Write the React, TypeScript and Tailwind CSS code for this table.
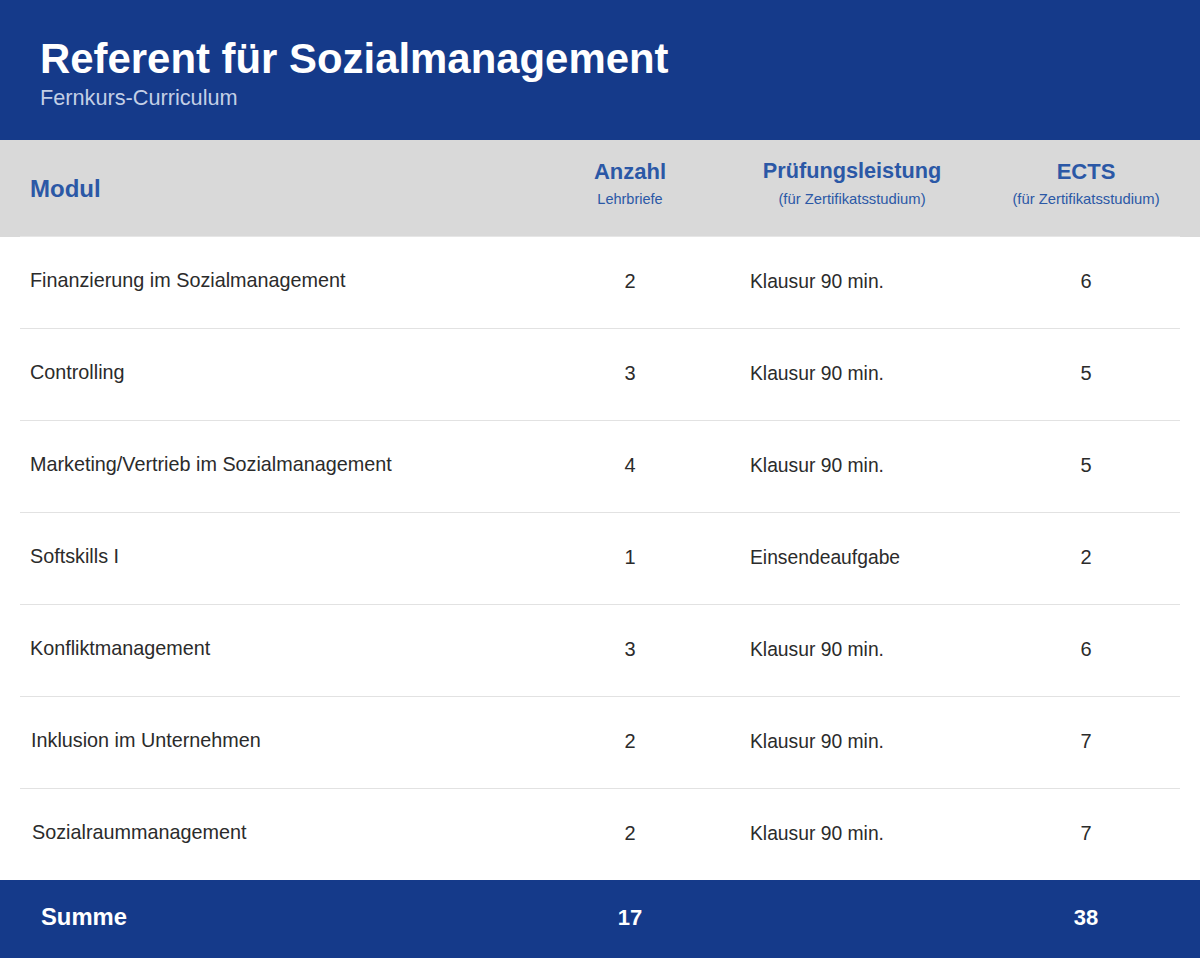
import React from 'react';

interface Modul {
  name: string;
  anzahl: number;
  pruefung: string;
  ects: number;
  indent?: string;
}

const module: Modul[] = [
  { name: 'Finanzierung im Sozialmanagement', anzahl: 2, pruefung: 'Klausur 90 min.', ects: 6 },
  { name: 'Controlling', anzahl: 3, pruefung: 'Klausur 90 min.', ects: 5 },
  { name: 'Marketing/Vertrieb im Sozialmanagement', anzahl: 4, pruefung: 'Klausur 90 min.', ects: 5 },
  { name: 'Softskills I', anzahl: 1, pruefung: 'Einsendeaufgabe', ects: 2 },
  { name: 'Konfliktmanagement', anzahl: 3, pruefung: 'Klausur 90 min.', ects: 6 },
  { name: 'Inklusion im Unternehmen', anzahl: 2, pruefung: 'Klausur 90 min.', ects: 7, indent: 'pl-[11px]' },
  { name: 'Sozialraummanagement', anzahl: 2, pruefung: 'Klausur 90 min.', ects: 7, indent: 'pl-[12px]' },
];

const cols = 'grid grid-cols-[500px_220px_224px_216px]';

const App: React.FC = () => {
  const summeAnzahl = module.reduce((s, m) => s + m.anzahl, 0);
  const summeEcts = module.reduce((s, m) => s + m.ects, 0);

  return (
    <div className="w-[1200px] h-[958px] bg-white font-['Liberation_Sans',Arial,sans-serif] flex flex-col">
      {/* Kopfbereich */}
      <div className="h-[140px] bg-[#153a8a] px-[40px] pt-[35px]">
        <h1 className="text-[41.9px] font-bold text-white leading-[1.15]">Referent für Sozialmanagement</h1>
        <p className="text-[21.7px] text-[#c3cfe6] leading-[1.15] mt-[3px]">Fernkurs-Curriculum</p>
      </div>

      {/* Tabellenkopf */}
      <div className="bg-[#d9d9d9] px-[20px]">
        <div className={`${cols} h-[97px] border-b border-[#e6e6e6]`}>
          <div className="flex items-center pl-[10px] pt-[1px]">
            <span className="text-[24px] font-bold text-[#2b58a6]">Modul</span>
          </div>
          <div className="flex flex-col items-center pt-[19px]">
            <span className="text-[22px] font-bold text-[#2b58a6] leading-[1.15]">Anzahl</span>
            <span className="text-[14.5px] text-[#2b58a6] leading-[1.15] mt-[7px]">Lehrbriefe</span>
          </div>
          <div className="flex flex-col items-center pt-[19px]">
            <span className="text-[21.7px] font-bold text-[#2b58a6] leading-[1.15]">Prüfungsleistung</span>
            <span className="text-[14.8px] text-[#2b58a6] leading-[1.15] mt-[7px]">(für Zertifikatsstudium)</span>
          </div>
          <div className="flex flex-col items-center pt-[19px] pl-[28px]">
            <span className="text-[22px] font-bold text-[#2b58a6] leading-[1.15]">ECTS</span>
            <span className="text-[14.8px] text-[#2b58a6] leading-[1.15] mt-[7px]">(für Zertifikatsstudium)</span>
          </div>
        </div>
      </div>

      {/* Zeilen */}
      <div className="px-[20px]">
        {module.map((m, i) => (
          <div
            key={m.name}
            className={`${cols} ${i < module.length - 1 ? 'h-[92px] border-b border-[#e2e2e2]' : 'h-[91px]'} text-[#2b2b2b] pb-[4px]`}
          >
            <div className={`flex items-center ${m.indent ?? 'pl-[10px]'} text-[19.8px]`}>{m.name}</div>
            <div className="flex items-center justify-center text-[20px]">{m.anzahl}</div>
            <div className="flex items-center pl-[10px] pt-[4px] text-[19.3px]">{m.pruefung}</div>
            <div className="flex items-center justify-center pl-[28px] text-[20px]">{m.ects}</div>
          </div>
        ))}
      </div>

      {/* Summe */}
      <div className="h-[78px] bg-[#153a8a] px-[20px]">
        <div className={`${cols} h-full text-white font-bold pb-[4px]`}>
          <div className="flex items-center pl-[21px] text-[23.8px]">Summe</div>
          <div className="flex items-center justify-center text-[22px]">{summeAnzahl}</div>
          <div />
          <div className="flex items-center justify-center pl-[28px] text-[22px]">{summeEcts}</div>
        </div>
      </div>
    </div>
  );
};

export default App;
